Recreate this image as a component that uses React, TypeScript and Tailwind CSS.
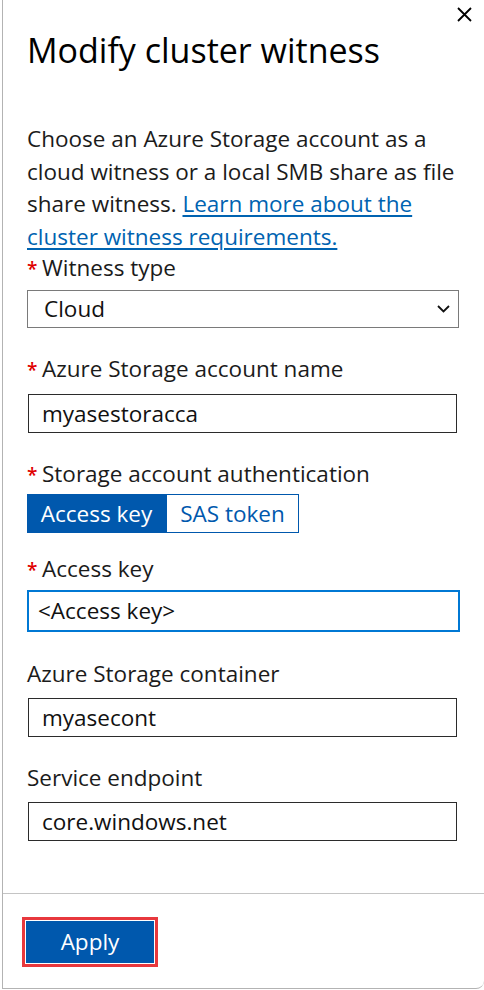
const FONT = { fontFamily: '"Open Sans", "Noto Sans", sans-serif' };

function Label({ text, required }: { text: string; required?: boolean }) {
  return (
    <div className="flex items-baseline text-[22.5px] leading-[26px] text-[#1b1b1b]">
      {required && <span className="w-[15px] text-[#e00000] text-[19px] font-semibold">*</span>}
      <span>{text}</span>
    </div>
  );
}

function TextBox({ value, focused }: { value: string; focused?: boolean }) {
  return (
    <div
      className={
        focused
          ? "mt-[7px] h-[42px] w-[433px] border-2 border-[#0078d4] pl-[9px] flex items-center text-[22.5px] text-[#111]"
          : "mt-[11px] ml-px h-[39px] w-[429px] border border-[#2b2b2b] pl-[13px] flex items-center text-[22.5px] text-[#111]"
      }
    >
      {value}
    </div>
  );
}

export default function App() {
  return (
    <div className="w-full h-[990px] bg-white" style={FONT}>
      <div className="ml-[2px] h-[989px] border-l border-b border-[#b3b3b3] rounded-br-[8px] flex flex-col">
        <div className="flex justify-end pt-[7px] pr-[12px]">
          <svg width="15" height="15" viewBox="0 0 15 15" className="text-black">
            <path d="M1 1 L14 14 M14 1 L1 14" stroke="currentColor" strokeWidth="1.8" />
          </svg>
        </div>

        <div className="flex-1 pl-[24px] pr-[24px]">
          <h1 className="mt-[8px] text-[34px] leading-[40px] text-black">Modify cluster witness</h1>

          <p className="mt-[53px] text-[22.5px] leading-[32.5px] text-[#1b1b1b]">
            Choose an Azure Storage account as a cloud witness or a local SMB share as file share witness.{" "}
            <a className="text-[#0063b1] underline underline-offset-[3px]">Learn more about the cluster witness requirements.</a>
          </p>

          <div className="mt-[2px]">
            <Label text="Witness type" required />
          </div>
          <div className="mt-[8px] h-[38px] w-[432px] border border-[#7a7a7a] pl-[16px] pr-[8px] flex items-center justify-between text-[22.5px] text-[#111]">
            <span>Cloud</span>
            <svg width="13" height="8" viewBox="0 0 13 8">
              <path d="M1 1 L6.5 6.5 L12 1" fill="none" stroke="#111" strokeWidth="1.8" />
            </svg>
          </div>

          <div className="mt-[28px]">
            <Label text="Azure Storage account name" required />
            <TextBox value="myasestoracca" />
          </div>

          <div className="mt-[28px]">
            <Label text="Storage account authentication" required />
            <div className="mt-[6px] flex h-[39px] text-[22.5px]">
              <div className="w-[139px] bg-[#0058ad] text-white flex items-center justify-center">Access key</div>
              <div className="w-[133px] border border-[#0058ad] text-[#0058ad] flex items-center justify-center">SAS token</div>
            </div>
          </div>

          <div className="mt-[23px]">
            <Label text="Access key" required />
            <TextBox value="<Access key>" focused />
          </div>

          <div className="mt-[29px]">
            <Label text="Azure Storage container" />
            <TextBox value="myasecont" />
          </div>

          <div className="mt-[28px]">
            <Label text="Service endpoint" />
            <TextBox value="core.windows.net" />
          </div>
        </div>

        <div className="border-t border-[#c4c4c4] h-[95px] pl-[19px] pt-[23px]">
          <div className="w-[136px] h-[50px] border-[3px] border-[#e8383d] p-px">
            <button className="w-full h-full bg-[#0058ad] text-white text-[22.5px]">Apply</button>
          </div>
        </div>
      </div>
    </div>
  );
}
